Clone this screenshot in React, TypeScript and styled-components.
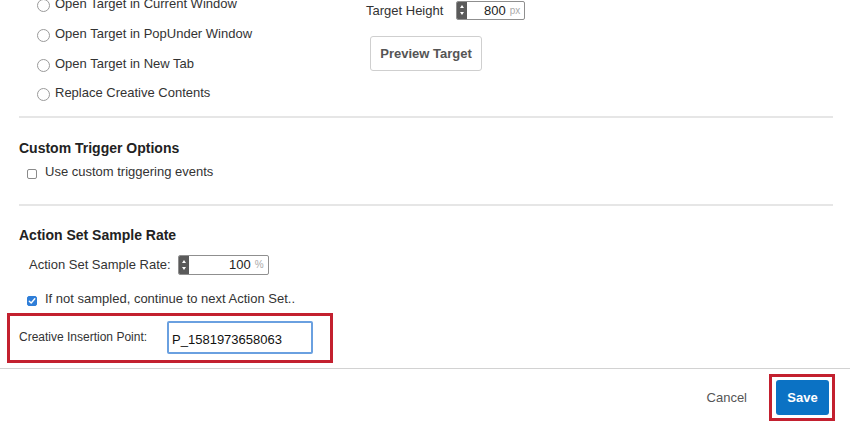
import React from 'react';
import styled, { createGlobalStyle } from 'styled-components';

const GlobalStyle = createGlobalStyle`
  html, body {
    margin: 0;
    padding: 0;
    background: #fff;
  }
  body {
    font-family: 'Liberation Sans', Arial, Helvetica, sans-serif;
    color: #333;
  }
`;

const Page = styled.div`
  width: 850px;
  height: 425px;
  overflow: hidden;
  display: flex;
  flex-direction: column;
  background: #fff;
`;

const Body = styled.div`
  flex: 1;
  padding: 0 17px 0 19px;
  display: flex;
  flex-direction: column;
`;

const TopSection = styled.div`
  margin-top: -11px;
  padding-bottom: 8px;
  border-bottom: 2px solid #e6e6e6;
  display: grid;
  grid-template-columns: 347px 1fr;
`;

const RadioList = styled.div`
  padding-left: 18px;
  display: flex;
  flex-direction: column;
`;

const RadioRow = styled.label`
  height: 29.7px;
  display: flex;
  align-items: center;
  gap: 5px;
  font-size: 13px;
  color: #333;
`;

const RadioCircle = styled.span`
  width: 11px;
  height: 11px;
  margin-top: 4px;
  border: 1px solid #9a9a9a;
  border-radius: 50%;
  background: #fff;
  flex-shrink: 0;
`;

const RightColumn = styled.div`
  display: flex;
  flex-direction: column;
`;

const FieldRow = styled.div<{ $height: number; $indent?: number; $gap: number }>`
  height: ${(p) => p.$height}px;
  padding-left: ${(p) => p.$indent ?? 0}px;
  display: flex;
  align-items: center;
  gap: ${(p) => p.$gap}px;
`;

const FieldLabel = styled.span<{ $size?: number }>`
  font-size: ${(p) => p.$size ?? 13}px;
  color: #333;
`;

const SpinBox = styled.div<{ $width: number; $height: number }>`
  width: ${(p) => p.$width}px;
  height: ${(p) => p.$height}px;
  box-sizing: border-box;
  border: 1px solid #8f8f8f;
  border-radius: 2px;
  display: flex;
  align-items: stretch;
  background: #fff;
`;

const SpinHandle = styled.div`
  width: 10px;
  background: #5a5a5a;
  border-radius: 1px 0 0 1px;
  display: flex;
  flex-direction: column;
  align-items: center;
  justify-content: space-evenly;
`;

const SpinArrow = styled.span<{ $down?: boolean }>`
  width: 0;
  height: 0;
  border-left: 2.5px solid transparent;
  border-right: 2.5px solid transparent;
  ${(p) =>
    p.$down ? 'border-top: 3px solid #fff;' : 'border-bottom: 3px solid #fff;'}
`;

const SpinValue = styled.span`
  flex: 1;
  text-align: right;
  font-size: 13px;
  color: #222;
  align-self: center;
  padding-right: 4px;
`;

const SpinUnit = styled.span`
  font-size: 10px;
  color: #aaa;
  align-self: center;
  padding-right: 4px;
`;

const SecondaryButton = styled.button`
  margin: 5px 0 0 4px;
  width: 112px;
  height: 35px;
  box-sizing: border-box;
  border: 1px solid #cfcfcf;
  border-radius: 3px;
  background: #fff;
  font-family: inherit;
  font-size: 13px;
  font-weight: 600;
  color: #555;
`;

const Section = styled.div<{ $top: number; $bottom: number; $divider?: boolean }>`
  padding-top: ${(p) => p.$top}px;
  padding-bottom: ${(p) => p.$bottom}px;
  border-bottom: ${(p) => (p.$divider ? '2px solid #e6e6e6' : 'none')};
  display: flex;
  flex-direction: column;
`;

const SectionTitle = styled.h3`
  margin: 0;
  height: 20px;
  line-height: 20px;
  font-size: 14px;
  font-weight: 700;
  color: #222;
`;

const CheckRow = styled.label`
  height: 28px;
  padding-left: 8px;
  display: flex;
  align-items: center;
  gap: 8px;
  font-size: 13px;
  color: #333;
`;

const CheckBox = styled.span<{ $checked?: boolean }>`
  width: 10px;
  height: 10px;
  margin-top: 4px;
  box-sizing: border-box;
  border: 1px solid ${(p) => (p.$checked ? '#2f7ed8' : '#8a8a8a')};
  border-radius: 2px;
  background: ${(p) => (p.$checked ? '#2f7ed8' : '#fff')};
  display: flex;
  align-items: center;
  justify-content: center;
  flex-shrink: 0;
`;

const Highlight = styled.div`
  margin: 0 0 0 -12px;
  width: 326px;
  height: 50px;
  box-sizing: border-box;
  border: 3px solid #c3202f;
  padding: 5px 0 0 9px;
  display: flex;
  align-items: flex-start;
  gap: 20px;
`;

const InlineLabel = styled.span`
  margin-top: 8px;
  font-size: 12px;
  line-height: 16px;
  color: #333;
`;

const TextInput = styled.input`
  width: 146px;
  height: 33px;
  box-sizing: border-box;
  border: 2px solid #6aa0e0;
  border-radius: 2px;
  outline: none;
  padding: 4px 0 0 3px;
  font-family: inherit;
  font-size: 13px;
  color: #111;
`;

const Footer = styled.div`
  margin-top: 4px;
  height: 57px;
  box-sizing: border-box;
  border-top: 1px solid #d2d2d2;
  padding-right: 15px;
  display: flex;
  justify-content: flex-end;
  align-items: center;
  gap: 12px;
`;

const TextButton = styled.button`
  background: none;
  border: none;
  padding: 0 10px;
  font-family: inherit;
  font-size: 13px;
  color: #555;
`;

const SaveHighlight = styled.div`
  border: 3px solid #c3202f;
  padding: 3px 3px 3px 4px;
  display: flex;
`;

const PrimaryButton = styled.button`
  width: 53px;
  height: 35px;
  border: none;
  border-radius: 3px;
  background: #0b72c4;
  color: #fff;
  font-family: inherit;
  font-size: 13px;
  font-weight: 700;
`;

const Spinner = ({
  value,
  unit,
  width,
  height,
}: {
  value: string;
  unit: string;
  width: number;
  height: number;
}) => (
  <SpinBox $width={width} $height={height}>
    <SpinHandle>
      <SpinArrow />
      <SpinArrow $down />
    </SpinHandle>
    <SpinValue>{value}</SpinValue>
    <SpinUnit>{unit}</SpinUnit>
  </SpinBox>
);

const radioOptions = [
  'Open Target in Current Window',
  'Open Target in PopUnder Window',
  'Open Target in New Tab',
  'Replace Creative Contents',
];

const App: React.FunctionComponent = () => {
  return (
    <>
      <GlobalStyle />
      <Page>
        <Body>
          <TopSection>
            <RadioList>
              {radioOptions.map((option) => (
                <RadioRow key={option}>
                  <RadioCircle />
                  {option}
                </RadioRow>
              ))}
            </RadioList>
            <RightColumn>
              <FieldRow $height={42} $gap={13}>
                <FieldLabel>Target Height</FieldLabel>
                <Spinner value="800" unit="px" width={69} height={19} />
              </FieldRow>
              <SecondaryButton>Preview Target</SecondaryButton>
            </RightColumn>
          </TopSection>

          <Section $top={20} $bottom={18} $divider>
            <SectionTitle>Custom Trigger Options</SectionTitle>
            <CheckRow>
              <CheckBox />
              Use custom triggering events
            </CheckRow>
          </Section>

          <Section $top={19} $bottom={0}>
            <SectionTitle>Action Set Sample Rate</SectionTitle>
            <FieldRow $height={40} $indent={10} $gap={7}>
              <FieldLabel>Action Set Sample Rate:</FieldLabel>
              <Spinner value="100" unit="%" width={91} height={20} />
            </FieldRow>
            <CheckRow>
              <CheckBox $checked>
                <svg width="8" height="8" viewBox="0 0 8 8">
                  <path
                    d="M1.3 4.2 L3.2 6 L6.8 1.8"
                    fill="none"
                    stroke="#fff"
                    strokeWidth="1.4"
                    strokeLinecap="round"
                    strokeLinejoin="round"
                  />
                </svg>
              </CheckBox>
              If not sampled, continue to next Action Set..
            </CheckRow>
          </Section>

          <Highlight>
            <InlineLabel>Creative Insertion Point:</InlineLabel>
            <TextInput defaultValue="P_1581973658063" />
          </Highlight>
        </Body>

        <Footer>
          <TextButton>Cancel</TextButton>
          <SaveHighlight>
            <PrimaryButton>Save</PrimaryButton>
          </SaveHighlight>
        </Footer>
      </Page>
    </>
  );
};

export default App;
